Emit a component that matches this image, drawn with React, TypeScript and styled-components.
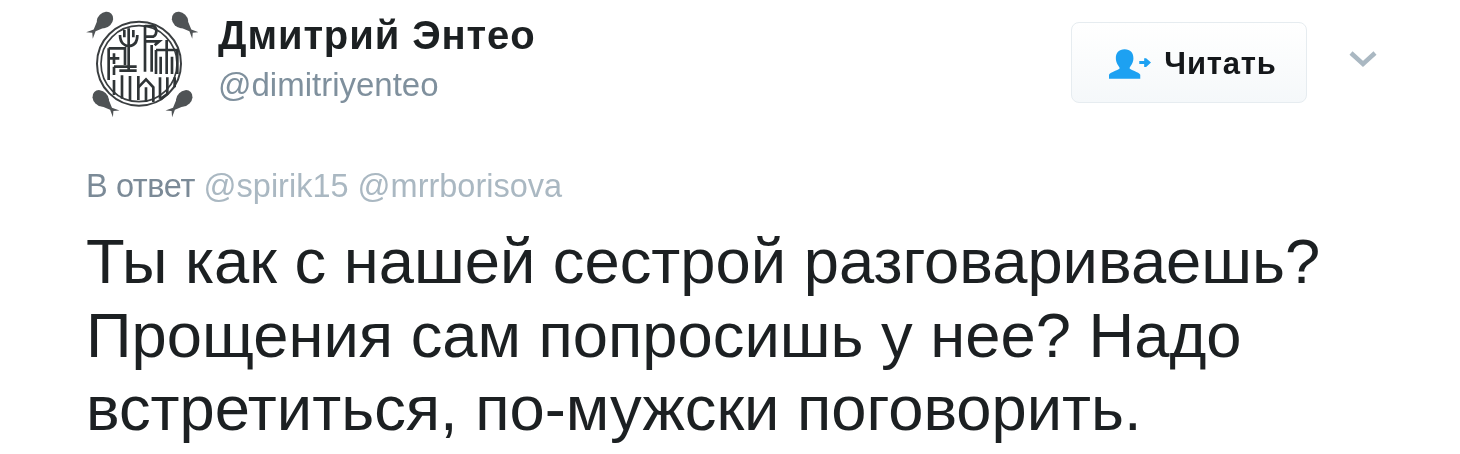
import React from 'react'
import styled, { createGlobalStyle } from 'styled-components'

const Global = createGlobalStyle`
    html, body {
        margin: 0;
        padding: 0;
        background: #fff;
    }
    body {
        font-family: "Liberation Sans", Arial, sans-serif;
    }
`

const Tweet = styled.div`
    width: 1460px;
    height: 454px;
    box-sizing: border-box;
    padding: 8px 82px 0 86px;
    overflow: hidden;
    background: #fff;
    filter: blur(0.6px);
`

const Header = styled.div`
    display: flex;
    align-items: flex-start;
    height: 112px;
`

const Avatar = styled.svg`
    width: 112px;
    height: 112px;
    flex: none;
`

const Names = styled.div`
    flex: 1;
    margin-left: 20px;
    padding-top: 5px;
`

const FullName = styled.div`
    font-size: 40px;
    line-height: 44px;
    font-weight: 700;
    letter-spacing: 0.9px;
    color: #1c2022;
`

const Handle = styled.div`
    font-size: 33px;
    line-height: 40px;
    margin-top: 8px;
    color: #7f909d;
`

const FollowButton = styled.div`
    display: flex;
    align-items: center;
    justify-content: center;
    gap: 13px;
    width: 236px;
    height: 81px;
    margin-top: 14px;
    padding: 2px 0 0 8px;
    box-sizing: border-box;
    border: 1px solid #e6ecf0;
    border-radius: 8px;
    background: linear-gradient(#fff, #f5f8fa);
    font-size: 31px;
    font-weight: 700;
    letter-spacing: 0.8px;
    color: #14171a;
`

const Chevron = styled.svg`
    width: 30px;
    height: 20px;
    margin: 41px 0 0 41px;
    flex: none;
`

const ReplyLine = styled.div`
    margin-top: 46px;
    font-size: 32.5px;
    line-height: 40px;
    letter-spacing: -0.4px;
    color: #7b8a97;
    > span {
        letter-spacing: 0;
        color: #aab8c2;
    }
`

const Body = styled.div`
    margin-top: 19px;
    font-size: 63.3px;
    line-height: 73.5px;
    color: #1c2022;
    white-space: pre-line;
`

function Logo() {
    const bird = (x: number, y: number, rot: number) => (
        <g transform={`translate(${x} ${y}) rotate(${rot})`} fill="#4f5355">
            <ellipse cx="0" cy="0" rx="22" ry="27" />
            <path d="M-19 8 L-4 44 L-14 66 L0 54 L14 66 L4 44 L19 8 Z" />
        </g>
    )
    return (
        <Avatar viewBox="48 24 336 336">
            {bird(105, 60, 45)}
            {bird(330, 60, -45)}
            {bird(92, 295, -45)}
            {bird(343, 295, 45)}
            <circle cx="207" cy="191" r="126" fill="#fff" stroke="#3a3e40" strokeWidth="6" />
            <circle cx="207" cy="191" r="114" fill="none" stroke="#3a3e40" strokeWidth="5" />
            <g fill="none" stroke="#2f3436" strokeWidth="8">
                <path d="M176 85 V215 M150 105 C150 130 165 138 176 138 C190 138 202 130 202 105 M163 90 V112 M190 90 V112" />
                <path d="M225 75 V215 M225 78 H250 C262 84 262 104 250 110 H225 M225 124 H268 L254 136" />
                <path d="M290 120 V222 M258 150 H322 V222 M258 150 V222 M272 170 V222 M306 170 V222 M245 135 V215" />
                <path d="M116 145 H165 V195 M116 145 V240 M116 175 H148 M132 160 V192 M132 200 H200 M132 200 V225 M148 212 H200" />
                <path d="M132 240 V285 M156 226 V296 M180 228 V302 M205 228 V300" />
                <path d="M205 262 L228 238 L250 262 V306 M228 262 V306" />
                <path d="M270 232 V296 M292 232 V282 L270 298 M314 232 V262" />
            </g>
        </Avatar>
    )
}

function FollowIcon() {
    return (
        <svg width="42" height="30" viewBox="0 0 43 30" fill="#1da1f2">
            <path d="M16 0 C22 0 25 4 25 9 C25 14 22 17 21 19 C21 21 31 23 32 26 V30 H0 V26 C1 23 11 21 11 19 C10 17 7 14 7 9 C7 4 10 0 16 0 Z" />
            <path d="M31 12 H36 V9 H38 L43 13.5 L38 18 H36 V15 H31 Z" />
        </svg>
    )
}

function App() {
    return (<Tweet>
        <Global />
        <Header>
            <Logo />
            <Names>
                <FullName>Дмитрий Энтео</FullName>
                <Handle>@dimitriyenteo</Handle>
            </Names>
            <FollowButton><FollowIcon />Читать</FollowButton>
            <Chevron viewBox="0 0 30 20">
                <path d="M3 4 L15 15 L27 4" fill="none" stroke="#aab8c2" strokeWidth="4.5" />
            </Chevron>
        </Header>
        <ReplyLine>В ответ <span>@spirik15 @mrrborisova</span></ReplyLine>
        <Body>{'Ты как с нашей сестрой разговариваешь?\nПрощения сам попросишь у нее? Надо\nвстретиться, по-мужски поговорить.'}</Body>
    </Tweet>)
}

export default App
